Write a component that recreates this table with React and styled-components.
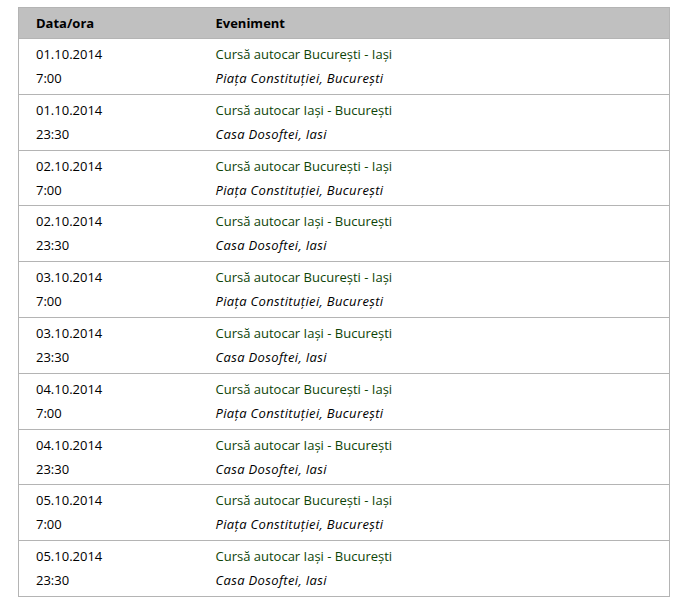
import styled, { createGlobalStyle } from "styled-components";

const GlobalStyle = createGlobalStyle`
    body{
        margin: 0;
        background: #fff;
        font-family: "Open Sans", "DejaVu Sans", sans-serif;
    }
`

const Page = styled.div`
    padding: 7px 12px 0 18px;
`

const Table = styled.table`
    width: 652px;
    border-collapse: collapse;
    border: 1px solid #b4b4b4;
    font-size: 13px;
    color: #000;
`

const HeadCell = styled.th`
    background: #c0c0c0;
    text-align: left;
    font-weight: 700;
    height: 31px;
    padding: 0 17px;
    border-bottom: 1px solid #b4b4b4;
    width: ${({w}) => w || "auto"};
    box-sizing: border-box;
`

const Row = styled.tr`
    border-bottom: 1px solid #b4b4b4;
`

const Cell = styled.td`
    padding: 3px 17px 3.8px;
    vertical-align: top;
    line-height: 24px;
`

const Line = styled.div`
    color: ${({green}) => green ? "#0e4407" : "#000"};
    font-style: ${({italic}) => italic ? "italic" : "normal"};
    letter-spacing: ${({italic}) => italic ? "0.35px" : "0"};
    font-weight: 500;
    white-space: nowrap;
`

const events = [
    {date: "01.10.2014", time: "7:00", title: "Cursă autocar București - Iași", place: "Piața Constituției, București"},
    {date: "01.10.2014", time: "23:30", title: "Cursă autocar Iași - București", place: "Casa Dosoftei, Iasi"},
    {date: "02.10.2014", time: "7:00", title: "Cursă autocar București - Iași", place: "Piața Constituției, București"},
    {date: "02.10.2014", time: "23:30", title: "Cursă autocar Iași - București", place: "Casa Dosoftei, Iasi"},
    {date: "03.10.2014", time: "7:00", title: "Cursă autocar București - Iași", place: "Piața Constituției, București"},
    {date: "03.10.2014", time: "23:30", title: "Cursă autocar Iași - București", place: "Casa Dosoftei, Iasi"},
    {date: "04.10.2014", time: "7:00", title: "Cursă autocar București - Iași", place: "Piața Constituției, București"},
    {date: "04.10.2014", time: "23:30", title: "Cursă autocar Iași - București", place: "Casa Dosoftei, Iasi"},
    {date: "05.10.2014", time: "7:00", title: "Cursă autocar București - Iași", place: "Piața Constituției, București"},
    {date: "05.10.2014", time: "23:30", title: "Cursă autocar Iași - București", place: "Casa Dosoftei, Iasi"},
]

function App(){
    return (
        <Page>
            <GlobalStyle />
            <Table>
                <thead>
                    <tr>
                        <HeadCell w="180px">Data/ora</HeadCell>
                        <HeadCell>Eveniment</HeadCell>
                    </tr>
                </thead>
                <tbody>
                    {
                        events.map((ev, i) => (
                            <Row key={i}>
                                <Cell>
                                    <Line>{ev.date}</Line>
                                    <Line>{ev.time}</Line>
                                </Cell>
                                <Cell>
                                    <Line green>{ev.title}</Line>
                                    <Line italic>{ev.place}</Line>
                                </Cell>
                            </Row>
                        ))
                    }
                </tbody>
            </Table>
        </Page>
    )
}

export default App
